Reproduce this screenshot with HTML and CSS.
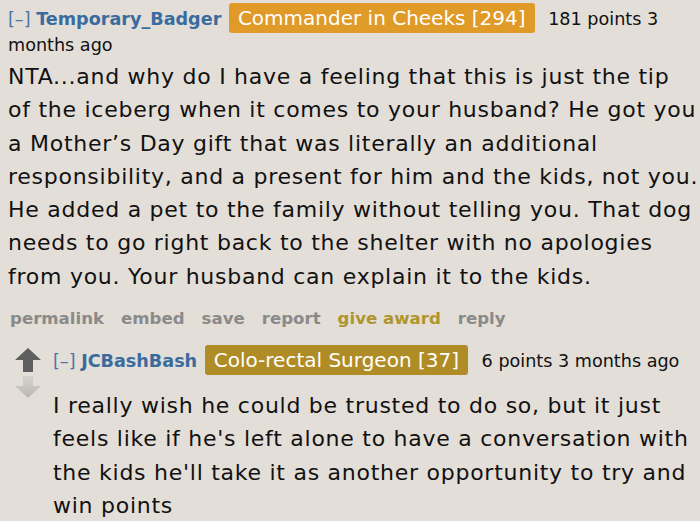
FILE: index.html
```html
<!DOCTYPE html>
<html>
<head>
<meta charset="utf-8">
<link rel="stylesheet" href="styles.css">
</head>
<body>
<div class="comment">
  <div class="tagline">
    <span class="expand">[–]</span> <span class="author">Temporary_Badger</span> <span class="flair orange">Commander in Cheeks [294]</span> <span class="score">181 points 3 months ago</span>
  </div>
  <div class="md">NTA...and why do I have a feeling that this is just the tip<br>of the iceberg when it comes to your husband? He got you<br>a Mother’s Day gift that was literally an additional<br>responsibility, and a present for him and the kids, not you.<br>He added a pet to the family without telling you. That dog<br>needs to go right back to the shelter with no apologies<br>from you. Your husband can explain it to the kids.</div>
  <ul class="buttons">
    <li>permalink</li>
    <li>embed</li>
    <li>save</li>
    <li>report</li>
    <li class="award">give award</li>
    <li>reply</li>
  </ul>
  <div class="child">
    <div class="votes">
      <svg class="arrow" width="26" height="24" viewBox="0 0 26 24"><path d="M13 0 L26 12 L18 12 L18 24 L8 24 L8 12 L0 12 Z" fill="#5f5f5f"/></svg>
      <svg class="arrow" width="26" height="22" viewBox="0 0 26 22"><defs><linearGradient id="g" x1="0" y1="0" x2="0" y2="1"><stop offset="0" stop-color="#d6d3cf"/><stop offset="1" stop-color="#b9b7b5"/></linearGradient></defs><path d="M8 0 L18 0 L18 10 L26 10 L13 22 L0 10 L8 10 Z" fill="url(#g)"/></svg>
    </div>
    <div class="entry">
      <div class="tagline">
        <span class="expand">[–]</span> <span class="author">JCBashBash</span> <span class="flair gold">Colo-rectal Surgeon [37]</span> <span class="score">6 points 3 months ago</span>
      </div>
      <div class="md reply-md">I really wish he could be trusted to do so, but it just<br>feels like if he's left alone to have a conversation with<br>the kids he'll take it as another opportunity to try and<br>win points</div>
    </div>
  </div>
</div>
</body>
</html>
```
FILE: styles.css
```css
html, body {
  margin: 0;
  padding: 0;
  background: #e3ded8;
}
body {
  font-family: "DejaVu Sans", Verdana, sans-serif;
  color: #111;
  width: 700px;
  height: 521px;
  overflow: hidden;
}
.comment {
  padding: 3px 0 0 8px;
}
.tagline {
  font-size: 17.6px;
  line-height: 25px;
}
.expand {
  color: #4a76a8;
}
.author {
  color: #3a6b9e;
  font-weight: bold;
}
.flair {
  display: inline-block;
  color: #fff;
  font-size: 20px;
  line-height: 30px;
  padding: 0 9px;
  border-radius: 3px;
  margin: 0 8px 0 2px;
}
.orange {
  background: #e09a28;
}
.gold {
  background: #b08c26;
}
.score {
  color: #111;
}
.md {
  font-size: 22px;
  letter-spacing: 0.74px;
  line-height: 33.3px;
  margin-top: 2px;
  white-space: nowrap;
}
.reply-md {
  margin-top: 14px;
}
.buttons {
  list-style: none;
  margin: 10px 0 0 2px;
  padding: 0;
  display: flex;
  gap: 17px;
  font-size: 16.6px;
  font-weight: bold;
  color: #8a8a8a;
  line-height: 32px;
}
.award {
  color: #b0952e;
}
.child {
  display: flex;
  margin-top: 10px;
}
.votes {
  box-sizing: border-box;
  display: flex;
  flex-direction: column;
  width: 45px;
  flex: none;
  padding-left: 7px;
  padding-top: 3px;
  gap: 4px;
}
.entry {
  flex: 1;
}
```
